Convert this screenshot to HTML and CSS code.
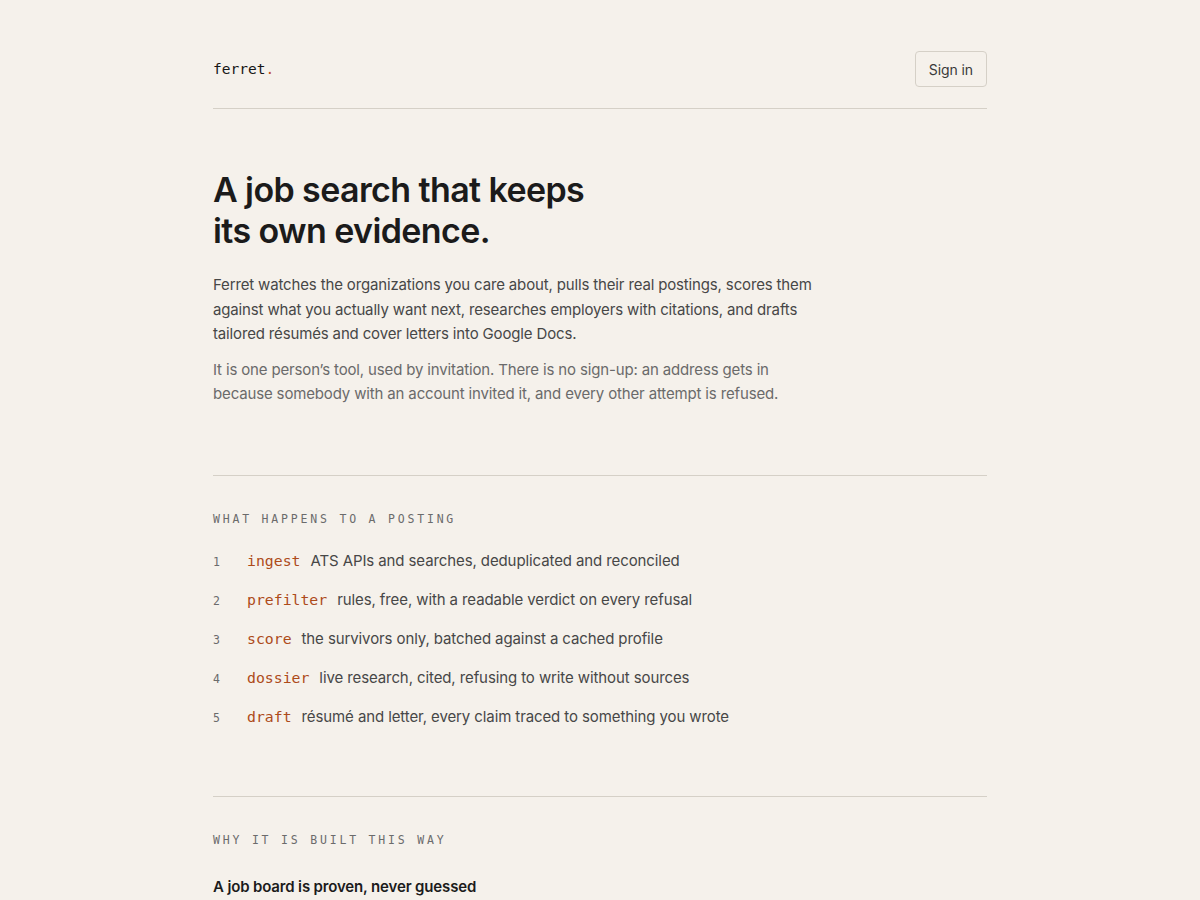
FILE: index.html
```html
<!DOCTYPE html>
<html lang="en">
<head>
<meta charset="utf-8">
<title>ferret.</title>
<link rel="stylesheet" href="styles.css">
</head>
<body>
<div class="page">
  <header class="site-header">
    <a class="logo" href="#">ferret<span class="dot">.</span></a>
    <a class="btn" href="#">Sign in</a>
  </header>

  <section class="hero">
    <h1>A job search that keeps<br>its own evidence.</h1>
    <p class="lead">Ferret watches the organizations you care about, pulls their real postings, scores them against what you actually want next, researches employers with citations, and drafts tailored résumés and cover letters into Google Docs.</p>
    <p class="note">It is one person’s tool, used by invitation. There is no sign-up: an address gets in because somebody with an account invited it, and every other attempt is refused.</p>
  </section>

  <section class="block">
    <h2 class="label">What happens to a posting</h2>
    <ol class="steps">
      <li><span class="num">1</span><span class="term">ingest</span><span class="desc">ATS APIs and searches, deduplicated and reconciled</span></li>
      <li><span class="num">2</span><span class="term">prefilter</span><span class="desc">rules, free, with a readable verdict on every refusal</span></li>
      <li><span class="num">3</span><span class="term">score</span><span class="desc">the survivors only, batched against a cached profile</span></li>
      <li><span class="num">4</span><span class="term">dossier</span><span class="desc">live research, cited, refusing to write without sources</span></li>
      <li><span class="num">5</span><span class="term">draft</span><span class="desc">résumé and letter, every claim traced to something you wrote</span></li>
    </ol>
  </section>

  <section class="block">
    <h2 class="label">Why it is built this way</h2>
    <h3 class="point">A job board is proven, never guessed</h3>
  </section>
</div>
</body>
</html>
```

FILE: styles.css
```css
html, body {
  margin: 0;
  padding: 0;
  background: #f5f1eb;
}
body {
  font-family: "Inter", "Liberation Sans", sans-serif;
  color: #1c1c1c;
}
.page {
  width: 774px;
  margin: 0 auto;
}
.site-header {
  display: flex;
  justify-content: space-between;
  align-items: center;
  padding: 51px 0 21px;
  border-bottom: 1px solid #d5d0c7;
}
.logo {
  font-family: "DejaVu Sans Mono", "Liberation Mono", monospace;
  font-size: 14.5px;
  color: #161616;
  text-decoration: none;
}
.logo .dot {
  color: #c0501f;
}
.btn {
  display: inline-flex;
  align-items: center;
  height: 34px;
  padding: 0 13px;
  border: 1px solid #d5d0c7;
  border-radius: 4px;
  font-size: 14px;
  letter-spacing: -0.1px;
  color: #3a3a3a;
  text-decoration: none;
}
.hero {
  padding: 60px 0 68px;
  border-bottom: 1px solid #d5d0c7;
}
h1 {
  margin: 0 0 22px;
  font-size: 34px;
  line-height: 41px;
  font-weight: 600;
  letter-spacing: -0.6px;
  color: #1b1b1b;
}
.lead, .note {
  margin: 0;
  max-width: 612px;
  font-size: 15px;
  line-height: 24.5px;
  letter-spacing: -0.15px;
}
.lead {
  color: #474747;
}
.note {
  margin-top: 11px;
  color: #6a6a6a;
}
.block {
  padding: 35px 0 67px;
  border-bottom: 1px solid #d5d0c7;
}
.block:last-child {
  border-bottom: none;
}
.label {
  margin: 0;
  font-family: "DejaVu Sans Mono", "Liberation Mono", monospace;
  font-size: 11.5px;
  line-height: 16px;
  font-weight: 400;
  letter-spacing: 2.8px;
  text-transform: uppercase;
  color: #6b6b6b;
}
.steps {
  list-style: none;
  margin: 22px 0 0;
  padding: 0;
  display: flex;
  flex-direction: column;
  gap: 15px;
}
.steps li {
  display: flex;
  align-items: baseline;
  height: 24px;
  line-height: 24px;
}
.num {
  width: 34px;
  flex: none;
  font-family: "DejaVu Sans Mono", "Liberation Mono", monospace;
  font-size: 11.5px;
  color: #6b6b6b;
}
.term {
  margin-right: 10px;
  font-family: "DejaVu Sans Mono", "Liberation Mono", monospace;
  font-size: 14.8px;
  color: #ad4b1a;
}
.desc {
  font-size: 15px;
  letter-spacing: -0.1px;
  color: #474747;
}
.point {
  margin: 27px 0 0;
  font-size: 15px;
  font-weight: 600;
  line-height: 24px;
  letter-spacing: -0.15px;
  color: #1b1b1b;
}
```
